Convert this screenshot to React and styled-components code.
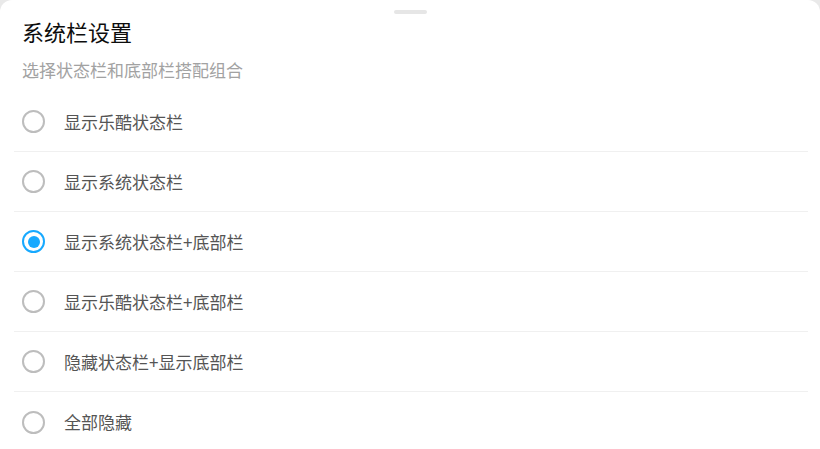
import React, { useState } from 'react'
import styled, { createGlobalStyle } from 'styled-components'

const GlobalStyle = createGlobalStyle`
  html, body {
    margin: 0;
    padding: 0;
    background: #e9e9e9;
  }
  body {
    font-family: "Noto Sans CJK SC", "Noto Sans", sans-serif;
  }
`

const Sheet = styled.div`
  width: 820px;
  min-height: 100vh;
  box-sizing: border-box;
  background: #fff;
  border-radius: 12px 12px 0 0;
  display: flex;
  flex-direction: column;

  > * {
    flex-shrink: 0;
  }
`

const Handle = styled.div`
  align-self: center;
  width: 33px;
  height: 4px;
  margin-top: 10px;
  border-radius: 2px;
  background: #e6e6e6;
`

const Header = styled.div`
  display: flex;
  flex-direction: column;
  padding: 0 22px;
`

const Title = styled.h1`
  margin: 2px 0 0;
  font-size: 22px;
  line-height: 30px;
  font-weight: 400;
  color: #0d0d0d;
`

const Subtitle = styled.p`
  margin: 12px 0 0;
  font-size: 17px;
  line-height: 24px;
  color: #a2a2a2;
`

const List = styled.div`
  display: flex;
  flex-direction: column;
  margin: 10px 12px 0 14px;
`

const Row = styled.label`
  display: flex;
  align-items: center;
  gap: 19px;
  height: 60px;
  padding-left: 8px;
  box-sizing: border-box;
  border-bottom: ${p => (p.$last ? 'none' : '1px solid #f0f0f0')};
  cursor: pointer;
`

const Radio = styled.span`
  width: 23px;
  height: 23px;
  box-sizing: border-box;
  border-radius: 50%;
  border: 2px solid ${p => (p.$checked ? '#17a9ff' : '#bdbdbd')};
  display: flex;
  align-items: center;
  justify-content: center;
  flex-shrink: 0;

  &::after {
    content: '';
    width: 12px;
    height: 12px;
    border-radius: 50%;
    background: #17a9ff;
    display: ${p => (p.$checked ? 'block' : 'none')};
  }
`

const OptionText = styled.span`
  font-size: 17px;
  color: #555;
  line-height: 24px;
`

const options = [
  '显示乐酷状态栏',
  '显示系统状态栏',
  '显示系统状态栏+底部栏',
  '显示乐酷状态栏+底部栏',
  '隐藏状态栏+显示底部栏',
  '全部隐藏',
]

export default function App() {
  const [selected, setSelected] = useState(2)

  return (
    <>
      <GlobalStyle />
      <Sheet>
        <Handle />
        <Header>
          <Title>系统栏设置</Title>
          <Subtitle>选择状态栏和底部栏搭配组合</Subtitle>
        </Header>
        <List>
          {options.map((text, i) => (
            <Row key={text} $last={i === options.length - 1} onClick={() => setSelected(i)}>
              <Radio $checked={selected === i} />
              <OptionText>{text}</OptionText>
            </Row>
          ))}
        </List>
      </Sheet>
    </>
  )
}
